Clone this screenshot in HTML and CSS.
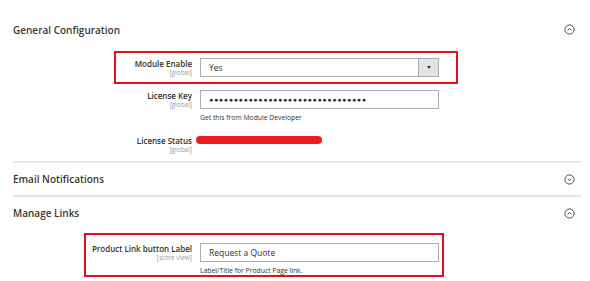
FILE: index.html
```html
<!DOCTYPE html>
<html lang="en">
<head>
    <meta charset="UTF-8">
    <meta name="viewport" content="width=device-width, initial-scale=1.0">
    <title>Configuration</title>
    <link rel="stylesheet" href="styles.css">
</head>
<body>
    <div class="section first">
        <div class="section-head">
            <span>General Configuration</span>
            <svg class="toggle" width="11" height="11" viewBox="0 0 11 11"><circle cx="5.5" cy="5.5" r="4.6" fill="none" stroke="#514943" stroke-width="1"/><path d="M3.6 6.4 L5.5 4.5 L7.4 6.4" fill="none" stroke="#514943" stroke-width="1"/></svg>
        </div>
        <div class="fields">
            <div class="row mark-a">
                <div class="label">Module Enable<small>[global]</small></div>
                <div class="control">
                    <div class="select"><span>Yes</span><span class="arrow"></span></div>
                </div>
            </div>
            <div class="row plain">
                <div class="label">License Key<small>[global]</small></div>
                <div class="control">
                    <div class="input dots">●●●●●●●●●●●●●●●●●●●●●●●●●●●●●●●●</div>
                    <div class="note">Get this from Module Developer</div>
                </div>
            </div>
            <div class="row plain status">
                <div class="label">License Status<small>[global]</small></div>
                <div class="control">
                    <span class="redact"></span>
                </div>
            </div>
        </div>
    </div>

    <div class="section">
        <div class="section-head">
            <span>Email Notifications</span>
            <svg class="toggle" width="11" height="11" viewBox="0 0 11 11"><circle cx="5.5" cy="5.5" r="4.6" fill="none" stroke="#514943" stroke-width="1"/><path d="M3.6 4.6 L5.5 6.5 L7.4 4.6" fill="none" stroke="#514943" stroke-width="1"/></svg>
        </div>
    </div>

    <div class="section">
        <div class="section-head">
            <span>Manage Links</span>
            <svg class="toggle" width="11" height="11" viewBox="0 0 11 11"><circle cx="5.5" cy="5.5" r="4.6" fill="none" stroke="#514943" stroke-width="1"/><path d="M3.6 6.4 L5.5 4.5 L7.4 6.4" fill="none" stroke="#514943" stroke-width="1"/></svg>
        </div>
        <div class="fields last">
            <div class="row mark-b">
                <div class="label">Product Link button Label<small>[store view]</small></div>
                <div class="control">
                    <div class="input">Request a Quote</div>
                    <div class="note">Label/Title for Product Page link.</div>
                </div>
            </div>
        </div>
    </div>
</body>
</html>
```

FILE: styles.css
```css
body {
    margin: 0;
    padding: 13px 9px 0 13px;
    font-family: "Open Sans", "Liberation Sans", sans-serif;
    color: #303030;
    background: #fff;
}
.section {
    border-top: 2px solid #e6e6e6;
}
.section.first {
    border-top: none;
}
.section-head {
    height: 32px;
    display: flex;
    align-items: center;
    justify-content: space-between;
    font-size: 10px;
    font-weight: 600;
    color: #41362f;
    padding-right: 6px;
}
.first .section-head {
    height: 33px;
}
.toggle {
    display: block;
}
.fields {
    padding: 5px 0 7px;
}
.fields.last {
    padding: 4px 0 0;
}
.row {
    display: flex;
    align-items: flex-start;
}
.label {
    text-align: right;
    font-size: 8px;
    font-weight: 600;
    line-height: 10px;
    padding-top: 1px;
    white-space: nowrap;
}
.label small {
    display: block;
    font-size: 6.5px;
    font-weight: 400;
    color: #9a9a9a;
    line-height: 8px;
}
.control {
    width: 239px;
    margin-left: 8px;
}
.plain {
    margin-left: 99px;
}
.plain .label {
    width: 80px;
}
.mark-a {
    margin-left: 101px;
    width: 340px;
    border: 2px solid #e3111b;
    padding: 5px 0 5px;
}
.mark-a .label {
    width: 76px;
}
.mark-b {
    margin-left: 71px;
    width: 356px;
    border: 2px solid #e3111b;
    padding: 8px 0 0;
}
.mark-b .label {
    width: 106px;
}
.row.plain {
    margin-top: 6px;
}
.row.status {
    margin-top: 13px;
}
.select, .input {
    height: 19px;
    box-sizing: border-box;
    border: 1px solid #adadad;
    font-size: 8.5px;
    line-height: 17px;
    padding-left: 8px;
    display: flex;
    justify-content: space-between;
}
.arrow {
    width: 19px;
    background: #e3e3e3;
    border-left: 1px solid #adadad;
    position: relative;
}
.arrow::after {
    content: "";
    position: absolute;
    left: 8px;
    top: 7px;
    border-left: 2px solid transparent;
    border-right: 2px solid transparent;
    border-top: 3px solid #41362f;
}
.dots {
    font-size: 7px;
    letter-spacing: 0.7px;
    color: #303030;
}
.note {
    font-size: 6.8px;
    line-height: 9px;
    margin-top: 4px;
    color: #303030;
}
.redact {
    display: block;
    width: 126px;
    height: 8px;
    margin: 1px 0 0 -4px;
    background: #ed1c24;
    border-radius: 4px;
}
```
